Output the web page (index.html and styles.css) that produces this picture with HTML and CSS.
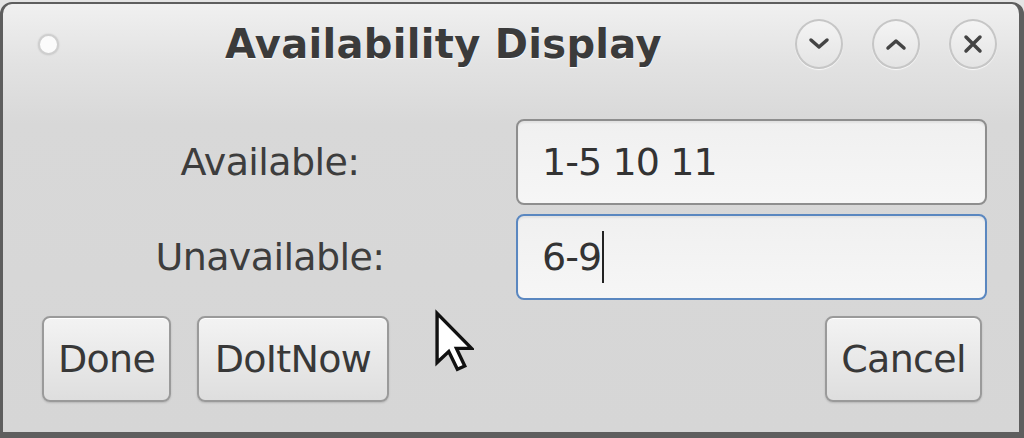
FILE: index.html
```html
<!DOCTYPE html>
<html lang="en">
<head>
  <meta charset="UTF-8" />
  <title>Availability Display</title>
  <link rel="stylesheet" href="styles.css">
</head>
<body>
  <div class="window">
    <header class="titlebar">
      <span class="menu-dot"></span>
      <h1 class="title">Availability Display</h1>
      <div class="controls">
        <button class="ctl" aria-label="Minimize">
          <svg width="22" height="14" viewBox="0 0 22 14"><path d="M3 3 L11 10 L19 3" fill="none" stroke="#444" stroke-width="3.5" stroke-linecap="round" stroke-linejoin="round"/></svg>
        </button>
        <button class="ctl" aria-label="Maximize">
          <svg width="22" height="14" viewBox="0 0 22 14"><path d="M3 11 L11 4 L19 11" fill="none" stroke="#444" stroke-width="3.5" stroke-linecap="round" stroke-linejoin="round"/></svg>
        </button>
        <button class="ctl" aria-label="Close">
          <svg width="22" height="22" viewBox="0 0 22 22"><path d="M4 4 L18 18 M18 4 L4 18" fill="none" stroke="#444" stroke-width="3.5" stroke-linecap="round"/></svg>
        </button>
      </div>
    </header>

    <main class="body">
      <div class="form">
        <label class="label">Available:</label>
        <div class="entry">1-5 10 11</div>
        <label class="label">Unavailable:</label>
        <div class="entry focused"><span class="caret">6-9</span></div>
      </div>

      <div class="actions">
        <button class="btn btn-done">Done</button>
        <button class="btn btn-doit">DoItNow</button>
        <button class="btn btn-cancel">Cancel</button>
      </div>
    </main>

    <svg class="pointer" width="40" height="64" viewBox="0 0 13 20">
      <path d="M1 1 L1 17 L4.8 13.4 L7.6 19.2 L10 18.1 L7.3 12.4 L12.2 12.4 Z" fill="#fff" stroke="#111" stroke-width="1.1" stroke-linejoin="miter"/>
    </svg>
  </div>
</body>
</html>
```

FILE: styles.css
```css
html, body {
  margin: 0;
  padding: 0;
  background: #e4e4e4;
  font-family: "DejaVu Sans", Verdana, sans-serif;
  color: #3a3a3a;
  overflow: hidden;
}
body {
  padding-top: 2px;
}

.window {
  position: relative;
  width: 1024px;
  height: 436px;
  box-sizing: border-box;
  border-style: solid;
  border-color: #5e5e5e;
  border-width: 2px 5px 6px 3px;
  border-radius: 12px 12px 0 0;
  background: linear-gradient(#f0f0f0 0px, #e2e2e2 60px, #d8d8d8 120px, #d6d6d6 100%);
  display: flex;
  flex-direction: column;
}

/* title bar */
.titlebar {
  height: 80px;
  display: flex;
  align-items: center;
  padding: 0 22px 0 35px;
  flex-shrink: 0;
}
.menu-dot {
  width: 17px;
  height: 17px;
  border-radius: 50%;
  background: #fbfbfb;
  border: 2px solid #cfcfcf;
  box-shadow: 0 0 2px rgba(0,0,0,0.15);
}
.title {
  margin: 0 0 0 166px;
  font-size: 40px;
  font-weight: bold;
  color: #3b3b3b;
  letter-spacing: 0.3px;
  text-shadow: 0 1px 1px #fff;
}
.controls {
  margin-left: auto;
  display: flex;
  gap: 29px;
}
.ctl {
  width: 48px;
  height: 50px;
  padding: 0;
  border-radius: 50%;
  border: 2px solid #c6c6c6;
  background: linear-gradient(#f4f4f4, #e4e4e4);
  box-shadow: 0 1px 1px rgba(255,255,255,0.8);
  display: flex;
  align-items: center;
  justify-content: center;
}

/* content */
.body {
  flex: 1;
  padding: 35px 32px 0 37px;
  display: flex;
  flex-direction: column;
}
.form {
  display: grid;
  grid-template-columns: 460px 471px;
  grid-auto-rows: 86px;
  column-gap: 16px;
  row-gap: 9px;
  align-items: center;
}
.label {
  text-align: center;
  font-size: 38px;
  letter-spacing: -0.6px;
  color: #3d3d3d;
}
.entry {
  height: 86px;
  box-sizing: border-box;
  border: 2px solid #8e8e8e;
  border-radius: 8px;
  background: linear-gradient(#f0f0f0, #f6f6f6);
  box-shadow: inset 0 2px 2px rgba(0,0,0,0.06);
  padding: 0 24px;
  display: flex;
  align-items: center;
  font-size: 38px;
  letter-spacing: -0.9px;
  color: #333;
}
.entry.focused {
  border-color: #5a87c0;
}
.caret {
  border-right: 2px solid #222;
  padding-right: 1px;
  line-height: 52px;
}

.actions {
  margin-top: 16px;
  display: flex;
  gap: 26px;
  padding: 0 5px 0 2px;
}
.btn {
  height: 86px;
  box-sizing: border-box;
  border: 2px solid #9a9a9a;
  border-radius: 8px;
  background: linear-gradient(#f3f3f3, #dedede);
  box-shadow: 0 1px 2px rgba(0,0,0,0.15), inset 0 1px 0 #fff;
  font-family: "DejaVu Sans", Verdana, sans-serif;
  font-size: 38px;
  letter-spacing: -0.7px;
  color: #383838;
  padding: 0;
}
.btn-done { width: 129px; }
.btn-doit { width: 192px; }
.btn-cancel { width: 157px; margin-left: auto; }

.pointer {
  position: absolute;
  left: 431px;
  top: 305px;
}
```
